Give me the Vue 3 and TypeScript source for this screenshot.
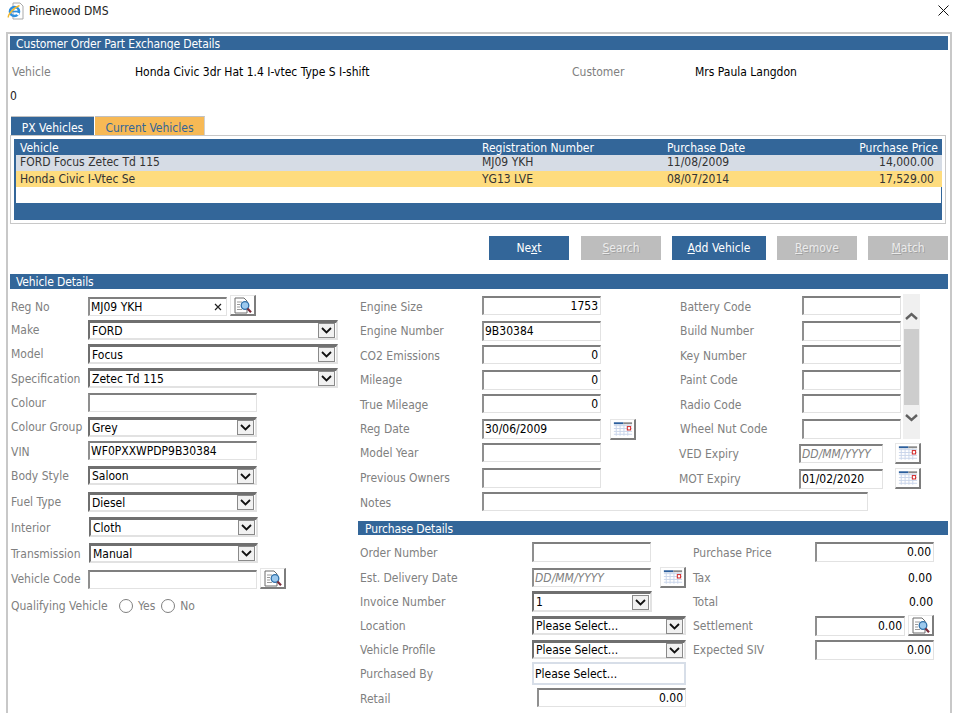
<script setup lang="ts">
interface Field {
  label?: string
  kind: 'input' | 'select' | 'box' | 'plain' | 'radios'
  value?: string
  w?: number
  h?: number
  right?: boolean
  hint?: string
  cal?: boolean
  search?: boolean
  clear?: boolean
  ml?: number
  nudge?: boolean
}
interface Group {
  cls: string
  fields: Field[]
}
interface Veh {
  name: string
  reg: string
  date: string
  price: string
  cls: string
}

const vehicles: Veh[] = [
  { name: 'FORD Focus Zetec Td 115', reg: 'MJ09 YKH', date: '11/08/2009', price: '14,000.00', cls: 'r-blue' },
  { name: 'Honda Civic I-Vtec Se', reg: 'YG13 LVE', date: '08/07/2014', price: '17,529.00', cls: 'r-gold' },
]

const buttons = [
  { pre: 'Ne', key: 'x', post: 't', w: 80, off: false },
  { pre: '', key: 'S', post: 'earch', w: 80, off: true },
  { pre: '', key: 'A', post: 'dd Vehicle', w: 94, off: false },
  { pre: '', key: 'R', post: 'emove', w: 80, off: true },
  { pre: '', key: 'M', post: 'atch', w: 80, off: true },
]

const sel = (label: string, value: string, w: number, h = 20, extra: Partial<Field> = {}): Field => ({ label, kind: 'select', value, w, h, ...extra })
const inp = (label: string, value: string, w: number, h = 20, extra: Partial<Field> = {}): Field => ({ label, kind: 'input', value, w, h, ...extra })

const groups: Group[] = [
  {
    cls: 'g-left',
    fields: [
      inp('Reg No', 'MJ09 YKH', 139, 19, { clear: true, search: true, nudge: true }),
      sel('Make', 'FORD', 250),
      sel('Model', 'Focus', 250),
      sel('Specification', 'Zetec Td 115', 250, 20, { nudge: true }),
      inp('Colour', '', 169, 19),
      sel('Colour Group', 'Grey', 169),
      inp('VIN', 'WF0PXXWPDP9B30384', 169, 19, { nudge: true }),
      sel('Body Style', 'Saloon', 169, 19),
      sel('Fuel Type', 'Diesel', 169),
      sel('Interior', 'Cloth', 169, 20, { ml: 1, nudge: true }),
      sel('Transmission', 'Manual', 169, 20, { ml: 1, nudge: true }),
      inp('Vehicle Code', '', 169, 19, { search: true }),
      { label: 'Qualifying Vehicle', kind: 'radios' },
    ],
  },
  {
    cls: 'g-mid',
    fields: [
      inp('Engine Size', '1753', 119, 19, { right: true, nudge: true }),
      inp('Engine Number', '9B30384', 119),
      inp('CO2 Emissions', '0', 119, 19, { right: true, nudge: true }),
      inp('Mileage', '0', 119, 20, { right: true }),
      inp('True Mileage', '0', 119, 19, { right: true, nudge: true }),
      inp('Reg Date', '30/06/2009', 119, 20, { cal: true }),
      inp('Model Year', '', 119, 19),
      inp('Previous Owners', '', 119),
    ],
  },
  {
    cls: 'g-rt',
    fields: [
      inp('Battery Code', '', 99, 19, { nudge: true }),
      inp('Build Number', '', 99),
      inp('Key Number', '', 99, 19, { nudge: true }),
      inp('Paint Code', '', 99),
      inp('Radio Code', '', 99, 19, { nudge: true }),
      inp('Wheel Nut Code', '', 99),
    ],
  },
  {
    cls: 'g-dates',
    fields: [
      inp('VED Expiry', '', 84, 19, { hint: 'DD/MM/YYYY', cal: true }),
      inp('MOT Expiry', '01/02/2020', 84, 20, { cal: true }),
    ],
  },
  {
    cls: 'g-notes',
    fields: [inp('Notes', '', 386, 19, { nudge: true })],
  },
  {
    cls: 'g-pl',
    fields: [
      inp('Order Number', '', 119, 20, { nudge: true }),
      inp('Est. Delivery Date', '', 119, 19, { hint: 'DD/MM/YYYY', cal: true }),
      sel('Invoice Number', '1', 120, 21),
      sel('Location', 'Please Select...', 154, 19),
      sel('Vehicle Profile', 'Please Select...', 154, 19),
      { label: 'Purchased By', kind: 'box', value: 'Please Select...', w: 154, h: 23 },
      inp('Retail', '0.00', 149, 19, { right: true, ml: 5, nudge: true }),
    ],
  },
  {
    cls: 'g-pr',
    fields: [
      inp('Purchase Price', '0.00', 119, 20, { right: true, nudge: true }),
      { label: 'Tax', kind: 'plain', value: '0.00', w: 117, h: 21 },
      { label: 'Total', kind: 'plain', value: '0.00', w: 118, h: 21 },
      inp('Settlement', '0.00', 90, 20, { right: true, search: true }),
      inp('Expected SIV', '0.00', 119, 20, { right: true }),
    ],
  },
]

const size = (f: Field) => ({
  width: f.w ? `${f.w}px` : undefined,
  height: f.h ? `${f.h}px` : undefined,
  marginLeft: f.ml ? `${f.ml}px` : undefined,
})
</script>

<template>
  <div class="window">
    <svg class="defs" aria-hidden="true">
      <symbol id="ic-search" viewBox="0 0 23 19">
        <path d="M4 2h9l3 3v12H4z" fill="#fff" stroke="#6d6d6d" />
        <path d="M6 6h5M6 8.500h3M6 11h3M6 13.500h5" stroke="#9a9a9a" />
        <circle cx="14" cy="9.500" r="3.800" fill="#9cc9ee" stroke="#2f6fa8" stroke-width="1.300" />
        <path d="M16.500 12.500l3.500 3.700" stroke="#7b2c3a" stroke-width="2.200" />
      </symbol>
      <symbol id="ic-cal" viewBox="0 0 24 18">
        <rect x="3" y="2" width="10" height="2" fill="#2b5e9c" />
        <rect x="13" y="2" width="9" height="2" fill="#8a8a8a" />
        <path d="M3 5.500h19M3 8.500h19M3 11.500h19M3 14.500h19M5.500 4v12M9.500 4v12M13.500 4v12M17.500 4v12" stroke="#c9d5ea" fill="none" />
        <rect x="17" y="6.500" width="3.500" height="3.500" fill="#fff" stroke="#d11a1a" />
      </symbol>
    </svg>

    <header class="titlebar">
      <svg class="ie" width="17" height="18" viewBox="0 0 17 18">
        <path d="M6 1h7l3 3v13H6z" fill="#fff" stroke="#a9a9a9" />
        <circle cx="7.500" cy="9.500" r="4.500" fill="none" stroke="#2d8fe0" stroke-width="2.600" />
        <path d="M3.500 9.500h8" stroke="#2d8fe0" stroke-width="1.700" />
        <path d="M12.500 11h-4l3 3z" fill="#fff" />
        <path d="M1.500 15.500c-1.200-2.200 5-10 11-12" fill="none" stroke="#f2b92e" stroke-width="1.500" />
      </svg>
      <span class="title">Pinewood DMS</span>
      <svg class="close" width="11" height="11" viewBox="0 0 11 11">
        <path d="M0.500 0.500l10 10M10.500 0.500l-10 10" stroke="#111" fill="none" />
      </svg>
    </header>

    <main class="frame">
      <h2 class="bar">Customer Order Part Exchange Details</h2>
      <div class="summary">
        <span class="lbl s-l1">Vehicle</span>
        <span class="s-v1">Honda Civic 3dr Hat 1.4 I-vtec Type S I-shift</span>
        <span class="lbl s-l2">Customer</span>
        <span>Mrs Paula Langdon</span>
      </div>
      <div class="zero">0</div>

      <div class="tabs">
        <div class="tab tab-on">PX Vehicles</div>
        <div class="tab tab-off">Current Vehicles</div>
      </div>
      <section class="panel">
        <div class="grid">
          <div class="g-row g-head">
            <span>Vehicle</span><span>Registration Number</span><span>Purchase Date</span><span class="num">Purchase Price</span>
          </div>
          <div v-for="v in vehicles" :key="v.reg" class="g-row g-data" :class="v.cls">
            <span>{{ v.name }}</span><span>{{ v.reg }}</span><span>{{ v.date }}</span><span class="num">{{ v.price }}</span>
          </div>
          <div class="g-empty"></div>
          <div class="g-foot"></div>
        </div>
      </section>

      <div class="actions">
        <button v-for="b in buttons" :key="b.post" type="button" class="btn" :class="{ off: b.off }" :style="{ width: `${b.w}px` }">{{ b.pre }}<u>{{ b.key }}</u>{{ b.post }}</button>
      </div>

      <h2 class="bar vd-bar">Vehicle Details</h2>
      <div class="details">
        <div v-for="g in groups" :key="g.cls" class="col" :class="g.cls">
          <div v-for="f in g.fields" :key="f.label" class="row">
            <span class="lbl flabel" :class="{ nudge: f.nudge }">{{ f.label }}</span>
            <div v-if="f.kind === 'radios'" class="radios">
              <i class="radio"></i><span class="lbl">Yes</span><i class="radio"></i><span class="lbl">No</span>
            </div>
            <div v-else-if="f.kind === 'select'" class="select" :style="size(f)">
              <span class="sel-text">{{ f.value }}</span>
              <span class="sel-btn">
                <svg width="11" height="7" viewBox="0 0 11 7"><path d="M1 1l4.500 4.500L10 1" fill="none" stroke="#111" stroke-width="1.800" /></svg>
              </span>
            </div>
            <div v-else-if="f.kind === 'box'" class="box" :style="size(f)">{{ f.value }}</div>
            <div v-else-if="f.kind === 'plain'" class="plain" :style="size(f)">{{ f.value }}</div>
            <div v-else class="input" :class="{ right: f.right }" :style="size(f)">
              <span v-if="f.hint" class="hint">{{ f.hint }}</span>
              <span v-else>{{ f.value }}</span>
              <svg v-if="f.clear" class="clear" width="8" height="8" viewBox="0 0 8 8"><path d="M1 1l6 6M7 1l-6 6" stroke="#222" stroke-width="1.200" /></svg>
            </div>
            <span v-if="f.search" class="icon-btn i-search"><svg width="23" height="19"><use href="#ic-search" /></svg></span>
            <span v-if="f.cal" class="icon-btn i-cal"><svg width="24" height="18"><use href="#ic-cal" /></svg></span>
          </div>
        </div>

        <div class="scroll">
          <div class="sc-end sc-up">
            <svg width="13" height="8" viewBox="0 0 13 8"><path d="M1 7l5.500-5L12 7" fill="none" stroke="#606060" stroke-width="2.400" /></svg>
          </div>
          <div class="sc-thumb"></div>
          <div class="sc-end sc-down">
            <svg width="13" height="8" viewBox="0 0 13 8"><path d="M1 1l5.500 5L12 1" fill="none" stroke="#606060" stroke-width="2.400" /></svg>
          </div>
        </div>

        <h2 class="bar pd-bar">Purchase Details</h2>
      </div>
    </main>
  </div>
</template>

<style scoped>
.window {
  position: relative;
  width: 953px;
  height: 713px;
  overflow: hidden;
  background: #fff;
  font-family: "DejaVu Sans Condensed", "DejaVu Sans", sans-serif;
  font-stretch: condensed;
  font-size: 12px;
  line-height: 14px;
  color: #000;
}
.defs { position: absolute; width: 0; height: 0; }
.titlebar { display: flex; align-items: center; height: 32px; padding: 1px 4px 11px 7px; box-sizing: border-box; }
.ie { margin-right: 5px; margin-top: -1px; }
.title { color: #222; flex: 1; }
.close { margin-top: -1px; }
.frame { width: 946px; height: 700px; margin-left: 6px; padding: 2px; box-sizing: border-box; border: 2px solid #c8c8c8; border-bottom: none; }
.bar { margin: 0; width: 938px; height: 14px; padding-left: 6px; box-sizing: border-box; background: #336699; color: #fff; font-size: 12px; font-weight: normal; line-height: 16px; letter-spacing: -0.12px; }
.lbl { color: #808080; white-space: nowrap; }
.summary { display: flex; margin: 15px 0 0 2px; height: 14px; }
.s-l1 { width: 123px; }
.s-v1 { width: 437px; }
.s-l2 { width: 123px; }
.zero { margin-top: 10px; height: 14px; color: #222; }
.tabs { display: flex; margin: 13px 0 0 1px; height: 20px; gap: 1px; }
.tab { padding-top: 4px; box-sizing: border-box; text-align: center; border-top: 1px solid #c0c0c0; }
.tab-on { width: 83px; background: #336699; color: #fff; }
.tab-off { width: 110px; background: #f7b955; color: #336699; border-right: 1px solid #d0d0d0; }
.panel { width: 936px; height: 89px; margin-top: -1px; padding: 3px; box-sizing: border-box; border: 1px solid #c8c8c8; position: relative; }
.grid { width: 928px; background: #336699; }
.g-row { display: grid; grid-template-columns: 462px 185px 120px 1fr; height: 16px; box-sizing: border-box; line-height: 15px; }
.num { text-align: right; }
.g-head { color: #fff; padding: 2px 4px 0 6px; }
.g-data { margin-left: 2px; padding: 0 8px 0 4px; color: #333; }
.r-blue { background: #d6dce5; }
.r-gold { background: #fedc7e; padding-top: 1px; }
.g-empty { height: 16px; margin-left: 2px; margin-right: 1px; background: #fff; }
.g-foot { height: 17px; }
.actions { display: flex; justify-content: flex-end; gap: 11px; width: 938px; margin-top: 12px; }
.btn { height: 24px; padding: 0; border: none; background: #336699; color: #fff; font: inherit; cursor: default; }
.btn:first-child { margin-right: 1px; }
.btn.off { background: #bdbdbd; color: #ececec; text-shadow: 1px 1px 0 #a2a2a2; }
.vd-bar { margin-top: 14px; height: 15px; }
.details {
  display: grid;
  grid-template-columns: 349px 320px 13px 255px;
  grid-template-rows: 147px 51px 29px 14px auto;
  margin-top: 5px;
  padding-left: 1px;
}
.col { display: grid; align-content: start; justify-items: start; align-items: start; }
.row { display: flex; align-items: center; }
.flabel { flex: none; }
.flabel.nudge { padding-top: 2px; }
.g-left { grid-column: 1; grid-row: 1 / 6; padding-top: 2px; grid-template-rows: 24px 24px 24px 25px 24px 24px 25px 26px 25px 26px 26px 29px 16px; }
.g-left .flabel { width: 77px; }
.g-mid { grid-column: 2; grid-row: 1 / 3; padding-top: 2px; grid-template-rows: repeat(8, 24.5px); }
.g-mid .flabel, .g-rt .flabel, .g-notes .flabel { width: 122px; }
.g-rt { grid-column: 3 / 5; grid-row: 1; padding-top: 2px; grid-template-rows: repeat(6, 24.5px); }
.g-dates { grid-column: 3 / 5; grid-row: 2; padding-top: 2px; grid-template-rows: 25px 25px; margin-left: -1px; }
.g-dates .flabel { width: 120px; }
.g-dates .i-cal { margin-left: 12px; }
.g-notes { grid-column: 2 / 5; grid-row: 3; }
.g-pl { grid-column: 2 / 4; grid-row: 5; padding-top: 7px; grid-template-rows: 25px 24px 25px 24px 22px 26px 20px; }
.g-pl .flabel { width: 172px; }
.g-pr { grid-column: 4; grid-row: 5; padding-top: 7px; grid-template-rows: 25px 24px 25px 24px 22px; }
.g-pr .flabel { width: 122px; }
.pd-bar { grid-column: 2 / 5; grid-row: 4; width: 590px; margin-left: -2px; padding-left: 7px; }
.input {
  display: flex;
  align-items: flex-start;
  box-sizing: border-box;
  padding: 1px 2px 0 1px;
  border-style: solid;
  border-width: 2px 1px 1px 2px;
  border-color: #7f7f7f #e2e2e2 #e2e2e2 #8f8f8f;
  background: #fff;
  overflow: hidden;
  white-space: nowrap;
}
.input.right { justify-content: flex-end; }
.hint { color: #808080; font-style: italic; }
.clear { margin: 3px 2px 0 auto; }
.select {
  display: flex;
  align-items: center;
  box-sizing: border-box;
  border-style: solid;
  border-width: 3px 2px 2px 2px;
  border-color: #6f6f6f #e2e2e2 #e2e2e2 #6f6f6f;
  background: #fff;
}
.sel-text { flex: 1; padding-left: 2px; white-space: nowrap; overflow: hidden; }
.sel-btn { display: flex; align-items: center; justify-content: center; flex: none; width: 17px; height: 15px; box-sizing: border-box; border: 1px solid #8a8a8a; background: #f1f1f1; margin-right: 1px; }
.box { display: flex; align-items: center; box-sizing: border-box; padding-left: 1px; border: 2px solid #d7dee8; background: #fff; }
.plain { display: flex; align-items: center; justify-content: flex-end; box-sizing: border-box; }
.icon-btn { display: flex; align-items: center; justify-content: center; flex: none; box-sizing: border-box; background: #fff; border-style: solid; border-width: 1px 2px 2px 1px; border-color: #e6e6e6 #7d7d7d #7d7d7d #e6e6e6; }
.i-search { width: 26px; height: 21px; margin-left: 3px; margin-top: -1px; }
.i-cal { width: 26px; height: 21px; margin-left: 9px; }
.radios { display: flex; align-items: center; margin-left: 31px; gap: 5px; margin-top: 1px; }
.radio { display: block; width: 12px; height: 12px; border: 1px solid #808080; border-radius: 50%; background: #fff; }
.radios .lbl:nth-of-type(1) { margin-right: 1px; }
.scroll { grid-column: 3 / 5; grid-row: 1; justify-self: start; align-self: start; margin-left: 223px; width: 17px; height: 145px; display: flex; flex-direction: column; background: #f0f0f0; }
.sc-end { flex: 1; display: flex; justify-content: center; }
.sc-up { align-items: flex-end; padding-bottom: 9px; }
.sc-down { align-items: flex-start; padding-top: 9px; }
.sc-thumb { height: 76px; margin: 0 1px; background: #cdcdcd; }
</style>
